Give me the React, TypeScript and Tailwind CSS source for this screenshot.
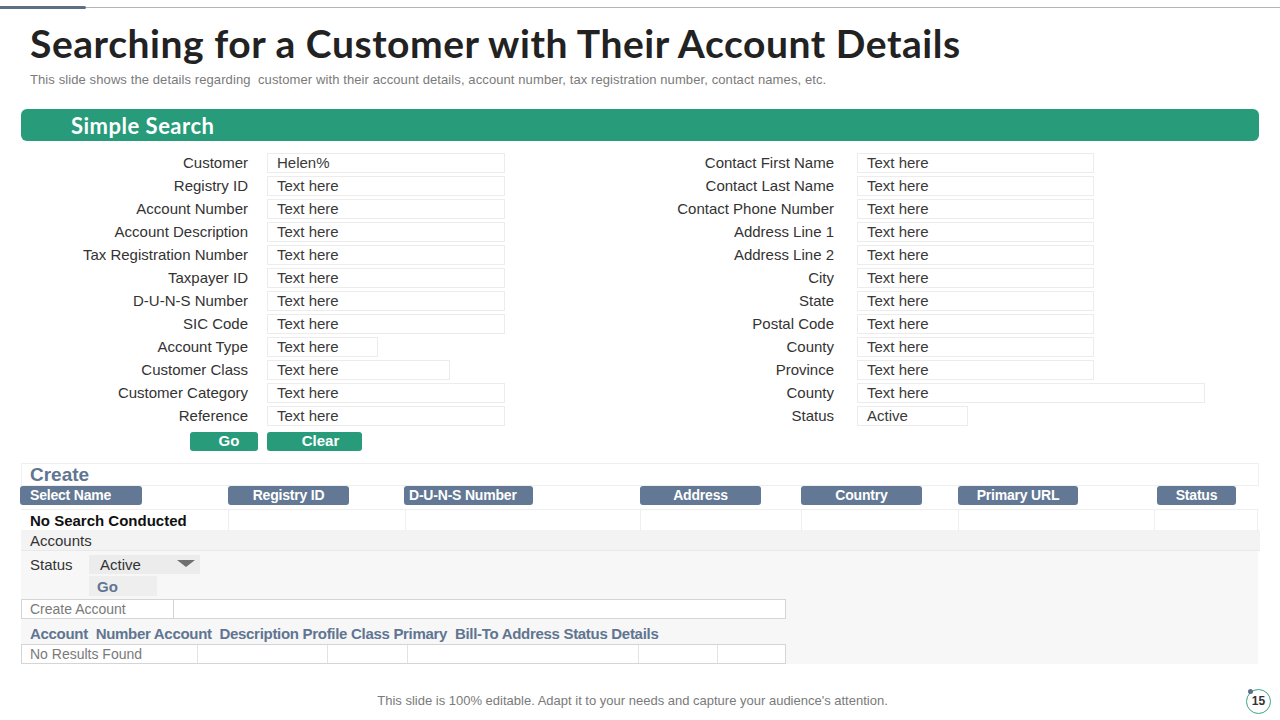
import React from 'react';

const leftRows: { label: string; value: string; w: string }[] = [
  { label: 'Customer', value: 'Helen%', w: 'w-[238px]' },
  { label: 'Registry ID', value: 'Text here', w: 'w-[238px]' },
  { label: 'Account Number', value: 'Text here', w: 'w-[238px]' },
  { label: 'Account Description', value: 'Text here', w: 'w-[238px]' },
  { label: 'Tax Registration Number', value: 'Text here', w: 'w-[238px]' },
  { label: 'Taxpayer ID', value: 'Text here', w: 'w-[238px]' },
  { label: 'D-U-N-S Number', value: 'Text here', w: 'w-[238px]' },
  { label: 'SIC Code', value: 'Text here', w: 'w-[238px]' },
  { label: 'Account Type', value: 'Text here', w: 'w-[111px]' },
  { label: 'Customer Class', value: 'Text here', w: 'w-[183px]' },
  { label: 'Customer Category', value: 'Text here', w: 'w-[238px]' },
  { label: 'Reference', value: 'Text here', w: 'w-[238px]' },
];

const rightRows: { label: string; value: string; w: string }[] = [
  { label: 'Contact First Name', value: 'Text here', w: 'w-[237px]' },
  { label: 'Contact Last Name', value: 'Text here', w: 'w-[237px]' },
  { label: 'Contact Phone Number', value: 'Text here', w: 'w-[237px]' },
  { label: 'Address Line 1', value: 'Text here', w: 'w-[237px]' },
  { label: 'Address Line 2', value: 'Text here', w: 'w-[237px]' },
  { label: 'City', value: 'Text here', w: 'w-[237px]' },
  { label: 'State', value: 'Text here', w: 'w-[237px]' },
  { label: 'Postal Code', value: 'Text here', w: 'w-[237px]' },
  { label: 'County', value: 'Text here', w: 'w-[237px]' },
  { label: 'Province', value: 'Text here', w: 'w-[237px]' },
  { label: 'County', value: 'Text here', w: 'w-[348px]' },
  { label: 'Status', value: 'Active', w: 'w-[111px]' },
];

const pills: { label: string; w: string; align: string }[] = [
  { label: 'Select Name', w: 'w-[122px] -ml-px', align: 'justify-start pl-[10px]' },
  { label: 'Registry ID', w: 'w-[121px] -ml-px', align: 'justify-center' },
  { label: 'D-U-N-S Number', w: 'w-[129px] -ml-[2px]', align: 'justify-start pl-[5px]' },
  { label: 'Address', w: 'w-[121px] -ml-px', align: 'justify-center' },
  { label: 'Country', w: 'w-[121px] -ml-px', align: 'justify-center' },
  { label: 'Primary URL', w: 'w-[120px] -ml-px', align: 'justify-center' },
  { label: 'Status', w: 'w-[79px] ml-[2px]', align: 'justify-center' },
];

const FormRow = ({ label, value, w, labelW, gap }: { label: string; value: string; w: string; labelW: string; gap: string }) => (
  <div className={`flex items-center h-[23px] ${gap}`}>
    <div className={`${labelW} text-right text-[15px] text-[#333333] leading-none`}>{label}</div>
    <div className={`${w} h-[20px] border border-[#ececec] flex items-center pl-[9px] text-[15px] text-[#3a3a3a] leading-none`}>
      {value}
    </div>
  </div>
);

export default function App() {
  return (
    <div className="w-[1280px] h-[720px] bg-white relative overflow-hidden" style={{ fontFamily: '"Liberation Sans", Arial, sans-serif' }}>
      {/* top rule */}
      <div className="flex items-end h-[9px]">
        <div className="w-[86px] h-[3px] bg-[#5c6f86] rounded-r"></div>
        <div className="flex-1 h-px bg-[#b5b5b5] mb-px"></div>
      </div>

      <div className="pl-[30px] pt-[12px]">
        <h1 className="text-[39px] leading-[44px] font-bold text-[#222222] tracking-[0.55px]" style={{ fontFamily: '"Lato", "DejaVu Sans", sans-serif' }}>
          Searching for a Customer with Their Account Details
        </h1>
        <p className="text-[13px] leading-[18px] text-[#7a7a7a] mt-[6px] tracking-[0.1px] whitespace-pre">
          This slide shows the details regarding  customer with their account details, account number, tax registration number, contact names, etc.
        </p>
      </div>

      <div className="mx-[21px] mt-[20px] h-[32px] rounded-[6px] bg-[#279b7a] flex items-center pl-[50px]">
        <span className="text-white font-bold text-[22px] tracking-[0.5px]" style={{ fontFamily: '"Lato", "DejaVu Sans", sans-serif' }}>Simple Search</span>
      </div>

      {/* form */}
      <div className="flex mt-[10px] pl-[21px]">
        <div className="w-[619px] flex flex-col">
          {leftRows.map((r, i) => (
            <FormRow key={i} {...r} labelW="w-[227px]" gap="gap-[19px]" />
          ))}
          <div className="flex gap-[9px] mt-[5px] ml-[169px]">
            <div className="w-[68px] h-[19px] rounded-[3px] bg-[#279b7a] text-white font-bold text-[15px] flex items-center justify-center pl-[10px]">Go</div>
            <div className="w-[95px] h-[19px] rounded-[3px] bg-[#279b7a] text-white font-bold text-[15px] flex items-center justify-center pl-[12px]">Clear</div>
          </div>
        </div>
        <div className="flex flex-col">
          {rightRows.map((r, i) => (
            <FormRow key={i} {...r} labelW="w-[194px]" gap="gap-[23px]" />
          ))}
        </div>
      </div>

      {/* create section */}
      <div className="ml-[21px] mt-[12px] w-[1238px] h-[23px] border border-[#efefef] flex items-center pl-[8px]">
        <span className="text-[19px] font-bold text-[#5f7591] leading-none">Create</span>
      </div>
      <div className="ml-[21px] w-[1237px] grid grid-cols-[208px_177px_235px_161px_157px_196px_103px] h-[20px]">
        {pills.map((p, i) => (
          <div key={i} className="flex">
            <div className={`${p.w} h-[19px] rounded-[3px] bg-[#627894] text-white font-bold text-[14px] flex items-center ${p.align} tracking-[-0.2px]`}>
              {p.label}
            </div>
          </div>
        ))}
      </div>
      <div className="ml-[21px] w-[1237px] grid grid-cols-[208px_177px_235px_161px_157px_196px_103px] h-[21px] mt-[3px] border-t border-[#efefef]">
        {pills.map((p, i) => (
          <div key={i} className={`h-[21px] border-r border-[#efefef] flex items-center ${i === 0 ? 'pl-[9px]' : 'border-l-0'}`}>
            {i === 0 && <span className="text-[15px] font-bold text-[#111111] leading-none">No Search Conducted</span>}
          </div>
        ))}
      </div>

      <div className="ml-[21px] w-[1239px] h-[21px] bg-[#f3f3f3] flex items-center pl-[9px] border-b border-[#e9e9e9]">
        <span className="text-[15px] text-[#333333] leading-none">Accounts</span>
      </div>
      <div className="ml-[21px] w-[1237px] h-[113px] bg-[#f7f7f7] flex flex-col">
        <div className="flex items-center h-[24px] mt-[1px]">
          <span className="w-[68px] pl-[9px] text-[15px] text-[#333333] leading-none">Status</span>
          <div className="w-[111px] h-[19px] bg-[#ececec] flex items-center justify-between pl-[11px] pr-[4px]">
            <span className="text-[15px] text-[#333333] leading-none">Active</span>
            <svg width="20" height="8" viewBox="0 0 20 8"><path d="M1 0 L19 0 L10 7 Z" fill="#6f6f6f" /></svg>
          </div>
        </div>
        <div className="ml-[68px] w-[68px] h-[20px] bg-[#eeeeee] flex items-center pl-[8px] text-[15px] font-bold text-[#5f7591] leading-none">Go</div>
        <div className="mt-[3px] w-[765px] h-[20px] bg-white border border-[#d5d5d5] flex">
          <div className="w-[152px] border-r border-[#d5d5d5] flex items-center pl-[8px] text-[14px] text-[#7a7a7a] leading-none">Create Account</div>
        </div>
        <div className="h-[23px] flex items-end pl-[9px] text-[15px] font-bold text-[#5f7591] leading-none tracking-[-0.3px] pb-[1px]">
          Account&nbsp; Number Account&nbsp; Description Profile Class Primary&nbsp; Bill-To Address Status Details
        </div>
        <div className="mt-[2px] w-[765px] h-[20px] bg-white border border-[#d5d5d5] grid grid-cols-[176px_130px_80px_231px_79px_1fr]">
          <div className="border-r border-[#e3e3e3] flex items-center pl-[8px] text-[14px] text-[#7a7a7a] leading-none">No Results Found</div>
          <div className="border-r border-[#e3e3e3]"></div>
          <div className="border-r border-[#e3e3e3]"></div>
          <div className="border-r border-[#e3e3e3]"></div>
          <div className="border-r border-[#e3e3e3]"></div>
          <div></div>
        </div>
      </div>

      {/* footer */}
      <div className="flex items-center mt-[24px] h-[26px]">
        <div className="flex-1 text-center text-[13px] text-[#7a7a7a] pl-[19px]">
          This slide is 100% editable. Adapt it to your needs and capture your audience's attention.
        </div>
        <div className="relative w-[25px] h-[25px] rounded-full border border-[#3aa68a] flex items-center justify-center mr-[9px] text-[12px] font-bold text-[#333333]">
          15
          <div className="absolute -top-[1px] left-[1px] w-[5px] h-[5px] rounded-full bg-[#5c6f86]"></div>
        </div>
      </div>
    </div>
  );
}
